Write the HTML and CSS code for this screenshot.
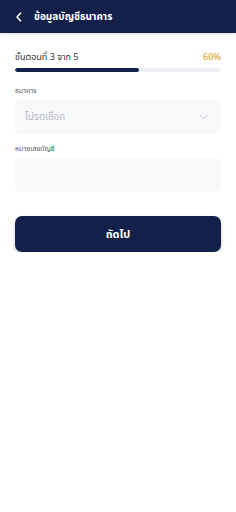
FILE: index.html
```html
<!DOCTYPE html>
<html lang="th">
  <head>
    <meta charset="UTF-8" />
    <meta name="viewport" content="width=device-width, initial-scale=1.0" />
    <title>ข้อมูลบัญชีธนาคาร</title>
    <link rel="stylesheet" href="styles.css">
  </head>
  <body>
    <div class="top-bar">
      <svg class="back-icon" width="8" height="10" viewBox="0 0 8 10">
        <path d="M5.5 1.2 L2 5 L5.5 8.8" fill="none" stroke="#fff" stroke-width="1.6" stroke-linecap="round" stroke-linejoin="round" />
      </svg>
      <div class="page-title">ข้อมูลบัญชีธนาคาร</div>
    </div>

    <div class="content">
      <div class="step-row">
        <span class="step-text">ขั้นตอนที่ 3 จาก 5</span>
        <span class="step-percent">60%</span>
      </div>
      <div class="progress">
        <div class="progress-fill" style="width: 60%"></div>
      </div>

      <div class="field">
        <div class="field-label">ธนาคาร</div>
        <div class="field-box select-box">
          <span class="placeholder">โปรดเลือก</span>
          <svg width="9" height="6" viewBox="0 0 9 6">
            <path d="M1 1 L4.5 4.5 L8 1" fill="none" stroke="#b9bdc6" stroke-width="0.9" stroke-linecap="round" stroke-linejoin="round" />
          </svg>
        </div>
      </div>

      <div class="field">
        <div class="field-label">หมายเลขบัญชี</div>
        <div class="field-box"></div>
      </div>

      <button class="next-btn">ถัดไป</button>
    </div>
  </body>
</html>
```

FILE: styles.css
```css
body {
  margin: 0;
  font-family: "Noto Sans Thai", "Noto Sans", "DejaVu Sans", sans-serif;
  background-color: #fff;
  color: #333;
}
.top-bar {
  height: 33px;
  background-color: #13214a;
  display: flex;
  align-items: center;
  padding-left: 15px;
  box-shadow: 0 1px 3px rgba(0, 0, 0, 0.15);
}
.back-icon {
  margin-right: 11px;
}
.page-title {
  color: #fff;
  font-size: 10px;
  font-weight: bold;
}
.content {
  padding: 17px 15px 0;
}
.step-row {
  display: flex;
  justify-content: space-between;
  align-items: center;
  font-size: 9px;
  line-height: 14px;
}
.step-text {
  color: #333;
}
.step-percent {
  color: #d9a72a;
  font-weight: 500;
}
.progress {
  margin-top: 4px;
  height: 4px;
  background-color: #eef0f5;
  border-radius: 2px;
  overflow: hidden;
}
.progress-fill {
  height: 100%;
  background-color: #13214a;
  border-radius: 2px;
}
.field {
  margin-top: 14px;
}
.field + .field {
  margin-top: 10px;
}
.field-label {
  font-size: 7px;
  color: #555;
  line-height: 10px;
  margin-bottom: 4px;
}
.field-box {
  height: 34px;
  background-color: #f7f8fa;
  border-radius: 6px;
}
.select-box {
  display: flex;
  align-items: center;
  justify-content: space-between;
  padding: 0 13px 0 10px;
}
.placeholder {
  font-size: 10px;
  color: #b8bcc4;
}
.next-btn {
  display: block;
  width: 100%;
  margin-top: 24px;
  height: 36px;
  border: none;
  border-radius: 7px;
  background-color: #13214a;
  color: #fff;
  font-family: inherit;
  font-size: 11px;
  font-weight: bold;
  box-shadow: 0 2px 4px rgba(0, 0, 0, 0.2);
}
```
